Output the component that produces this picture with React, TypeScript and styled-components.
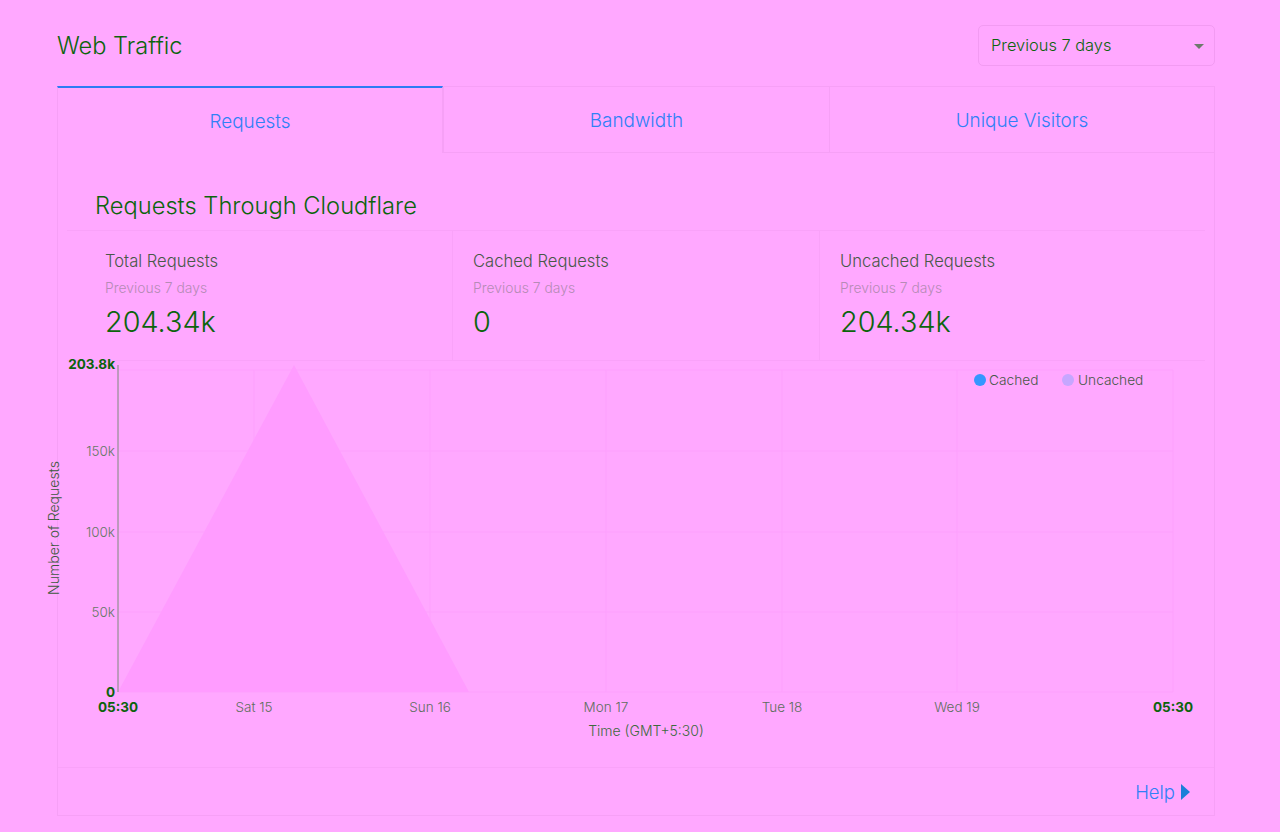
import React from 'react';
import styled, { createGlobalStyle } from 'styled-components';

const GlobalStyle = createGlobalStyle`
  html, body {
    margin: 0;
    padding: 0;
    background: #ffa8ff;
    font-family: Inter, "Noto Sans", "Liberation Sans", sans-serif;
  }
`;

const Page = styled.div`
  width: 1158px;
  padding: 0 65px 16px 57px;
`;

const Header = styled.div`
  display: flex;
  align-items: center;
  justify-content: space-between;
  height: 40px;
  padding: 25px 0 21px;
`;

const Title = styled.h1`
  margin: 0;
  font-size: 23.6px;
  font-weight: 300;
  color: #0c640c;
`;

const Select = styled.div`
  position: relative;
  box-sizing: border-box;
  width: 237px;
  height: 41px;
  display: flex;
  align-items: center;
  padding: 0 12px;
  border: 1px solid #f29bf2;
  border-radius: 5px;
  font-size: 16.4px;
  font-weight: 300;
  color: #0c640c;
`;

const Caret = styled.span`
  position: absolute;
  right: 10px;
  top: 18px;
  border-left: 5px solid transparent;
  border-right: 5px solid transparent;
  border-top: 5px solid #6c7a6c;
`;

const Card = styled.div`
  border: 1px solid #f6a0f6;
  border-top: none;
`;

const Tabs = styled.div`
  display: grid;
  grid-template-columns: repeat(3, 1fr);
  margin: 0 -1px;
`;

const Tab = styled.div<{ $active?: boolean }>`
  height: 67px;
  box-sizing: border-box;
  display: flex;
  align-items: center;
  justify-content: center;
  padding-top: 1px;
  font-size: 18.9px;
  font-weight: 300;
  color: #2f80f6;
  border-top: ${(p) => (p.$active ? '2px solid #2c7cf4' : '1px solid #f6a0f6')};
  border-left: 1px solid #f6a0f6;
  border-right: ${(p) => (p.$active ? '1px solid #f6a0f6' : 'none')};
  border-bottom: ${(p) => (p.$active ? 'none' : '1px solid #f6a0f6')};

  &:last-child {
    border-right: 1px solid #f6a0f6;
  }
`;

const Inner = styled.div`
  padding: 0 9px;
`;

const SectionTitle = styled.h2`
  margin: 0;
  padding: 39px 28px 10px;
  font-size: 23.7px;
  line-height: 28px;
  font-weight: 300;
  color: #0c640c;
`;

const Stats = styled.div`
  display: grid;
  grid-template-columns: repeat(3, 1fr);
  padding: 0 19px 0 18px;
  border-top: 1px solid #f9a2f9;
  border-bottom: 1px solid #f9a2f9;
`;

const Stat = styled.div<{ $divided?: boolean }>`
  height: 129px;
  box-sizing: border-box;
  padding: 19px 20px 0;
  border-left: ${(p) => (p.$divided ? '1px solid #f9a2f9' : 'none')};
`;

const StatLabel = styled.div`
  font-size: 16.6px;
  line-height: 22px;
  font-weight: 300;
  color: #485848;
`;

const StatSub = styled.div`
  margin-top: 7px;
  font-size: 13.9px;
  line-height: 18px;
  font-weight: 300;
  color: #b68bb6;
`;

const StatValue = styled.div`
  margin-top: 7px;
  font-size: 28.8px;
  line-height: 36px;
  font-weight: 300;
  color: #0c640c;
`;

const ChartWrap = styled.div`
  margin: 0 -9px;
  height: 406px;

  svg {
    display: block;
    overflow: visible;
  }
`;

const Footer = styled.div`
  height: 47px;
  border-top: 1px solid #f9a2f9;
  display: flex;
  align-items: center;
  justify-content: flex-end;
  padding-right: 24px;
`;

const HelpLink = styled.a`
  display: flex;
  align-items: center;
  gap: 6px;
  font-size: 18.5px;
  font-weight: 300;
  color: #2f80f6;
  text-decoration: none;
`;

const HelpArrow = styled.span`
  border-top: 8px solid transparent;
  border-bottom: 8px solid transparent;
  border-left: 9px solid #1a7fd8;
`;

const axisFont = 'Inter, "Noto Sans", "Liberation Sans", sans-serif';

const yTicks = [
  { label: '150k', y: 90 },
  { label: '100k', y: 171 },
  { label: '50k', y: 251 },
];

const xTicks = [
  { label: 'Sat 15', x: 196 },
  { label: 'Sun 16', x: 372 },
  { label: 'Mon 17', x: 548 },
  { label: 'Tue 18', x: 724 },
  { label: 'Wed 19', x: 899 },
];

const TrafficChart: React.FC = () => (
  <svg width="1156" height="406" viewBox="0 0 1156 406" fontFamily={axisFont} fontWeight="300">
    {/* grid */}
    {[9, 90, 171, 251, 331].map((y) => (
      <line key={y} x1="60" x2="1115" y1={y} y2={y} stroke="#fda0fd" strokeWidth="1" />
    ))}
    {[...xTicks.map((t) => t.x), 1115].map((x) => (
      <line key={x} x1={x} x2={x} y1="9" y2="331" stroke="#fda0fd" strokeWidth="1" />
    ))}

    {/* uncached area */}
    <polygon points="60,331 236,4 411,331" fill="#ff9cff" />

    {/* y axis */}
    <line x1="60" x2="60" y1="4" y2="331" stroke="#7c8a7c" strokeWidth="1" />
    <text x="57" y="8" textAnchor="end" fontSize="13.5" fontWeight="700" fill="#0c630c">203.8k</text>
    {yTicks.map((t) => (
      <text key={t.label} x="57" y={t.y + 5} textAnchor="end" fontSize="13.5" fill="#667866">
        {t.label}
      </text>
    ))}
    <text x="57" y="336" textAnchor="end" fontSize="13.5" fontWeight="700" fill="#0c630c">0</text>
    <text
      x="-3"
      y="167"
      textAnchor="middle"
      fontSize="14"
      fill="#3d5a3d"
      transform="rotate(-90 -3 167)"
      dominantBaseline="middle"
    >
      Number of Requests
    </text>

    {/* x axis */}
    <text x="60" y="351" textAnchor="middle" fontSize="13.5" fontWeight="700" fill="#0c630c">05:30</text>
    {xTicks.map((t) => (
      <text key={t.label} x={t.x} y="351" textAnchor="middle" fontSize="13.5" fill="#5e6e5e">
        {t.label}
      </text>
    ))}
    <text x="1115" y="351" textAnchor="middle" fontSize="13.5" fontWeight="700" fill="#0c630c">05:30</text>
    <text x="588" y="375" textAnchor="middle" fontSize="14" fill="#3d6a3d">Time (GMT+5:30)</text>

    {/* legend */}
    <circle cx="922" cy="19" r="6" fill="#3596ff" />
    <text x="931" y="24" fontSize="13.7" fill="#485848">Cached</text>
    <circle cx="1010" cy="19" r="6" fill="#c6a6ff" />
    <text x="1020" y="24" fontSize="13.7" fill="#485848">Uncached</text>
  </svg>
);

const App: React.FC = () => {
  const stats = [
    { label: 'Total Requests', value: '204.34k' },
    { label: 'Cached Requests', value: '0' },
    { label: 'Uncached Requests', value: '204.34k' },
  ];

  return (
    <>
      <GlobalStyle />
      <Page>
        <Header>
          <Title>Web Traffic</Title>
          <Select>
            Previous 7 days
            <Caret />
          </Select>
        </Header>
        <Card>
          <Tabs>
            <Tab $active>Requests</Tab>
            <Tab>Bandwidth</Tab>
            <Tab>Unique Visitors</Tab>
          </Tabs>
          <Inner>
            <SectionTitle>Requests Through Cloudflare</SectionTitle>
            <Stats>
              {stats.map((s, i) => (
                <Stat key={s.label} $divided={i > 0}>
                  <StatLabel>{s.label}</StatLabel>
                  <StatSub>Previous 7 days</StatSub>
                  <StatValue>{s.value}</StatValue>
                </Stat>
              ))}
            </Stats>
            <ChartWrap>
              <TrafficChart />
            </ChartWrap>
          </Inner>
          <Footer>
            <HelpLink href="#">
              Help
              <HelpArrow />
            </HelpLink>
          </Footer>
        </Card>
      </Page>
    </>
  );
};

export default App;
